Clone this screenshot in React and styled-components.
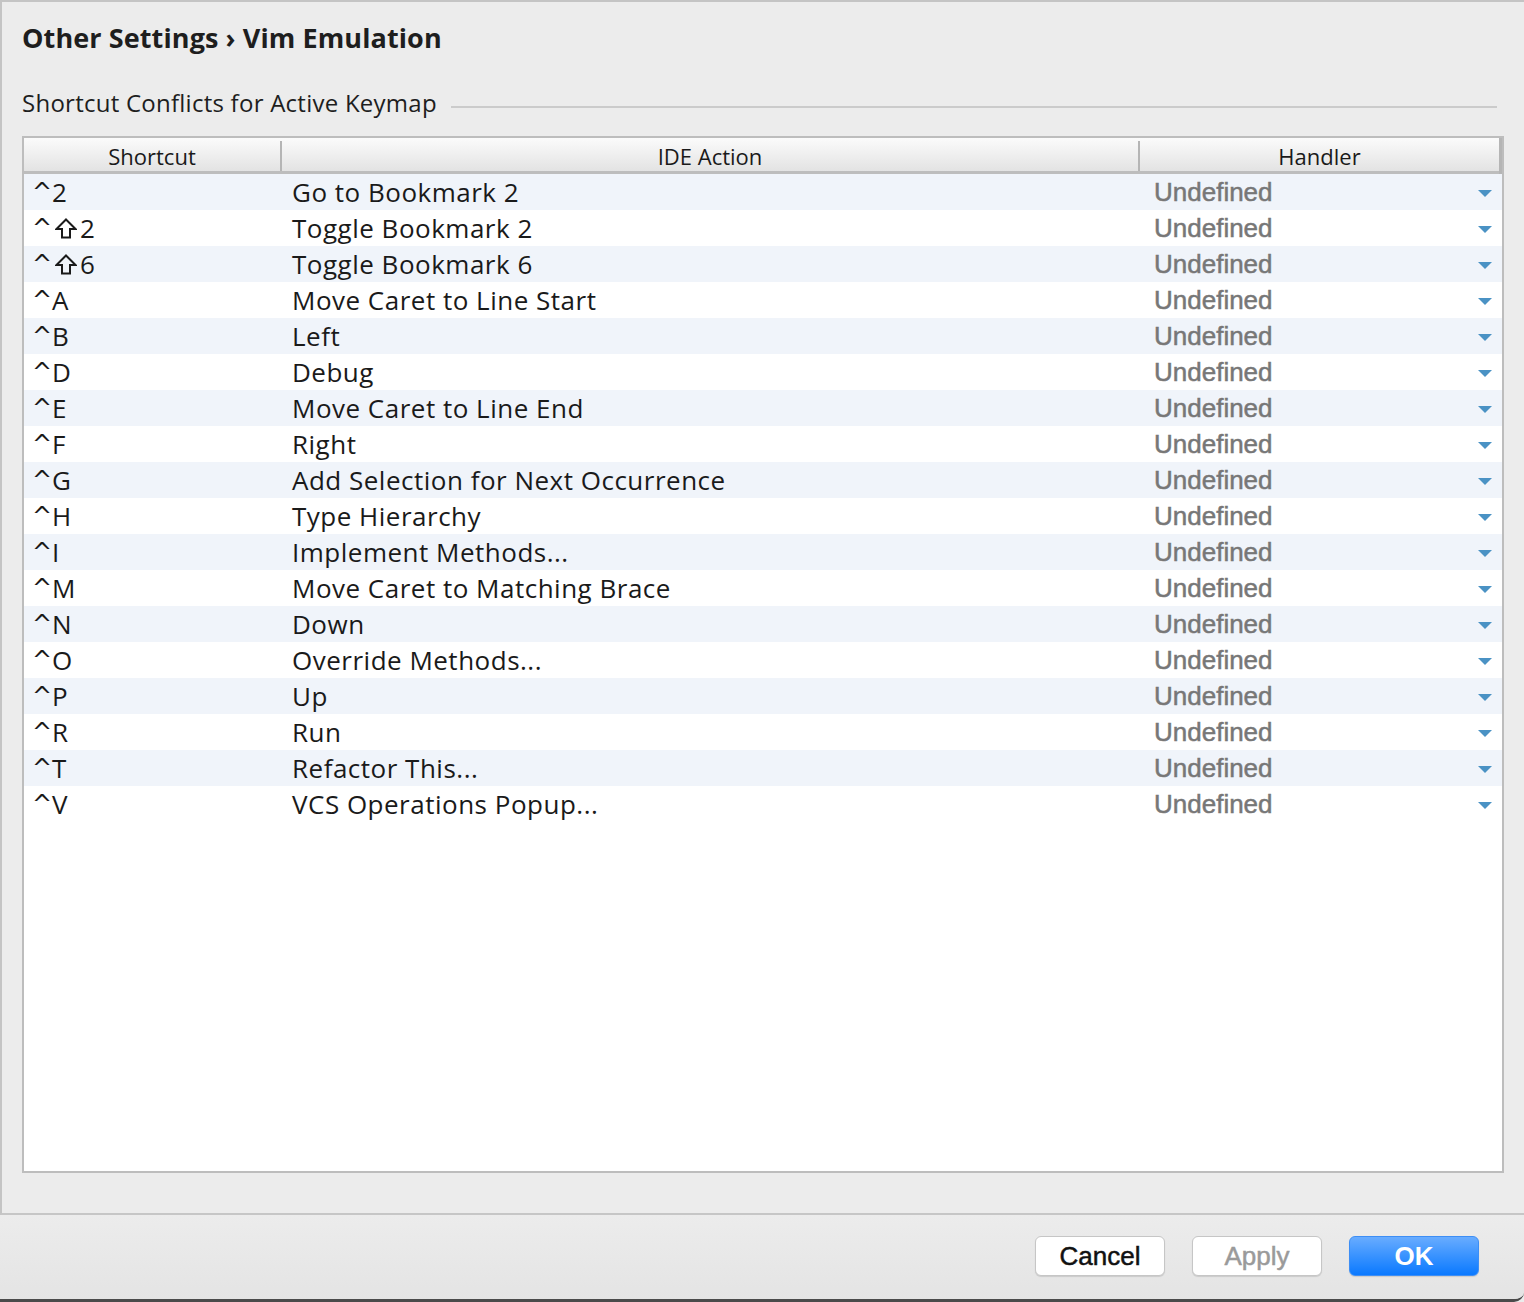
import React from "react";
import styled, { createGlobalStyle } from "styled-components";

const GlobalStyle = createGlobalStyle`
  html, body {
    margin: 0;
    padding: 0;
    background: #ececec;
  }
  body {
    font-family: "Open Sans", "DejaVu Sans", sans-serif;
    color: #1c1c1c;
  }
`;

// shift: true means the shortcut holds the shift key, drawn as an outlined arrow
const rows = [
  [false, "2", "Go to Bookmark 2"],
  [true, "2", "Toggle Bookmark 2"],
  [true, "6", "Toggle Bookmark 6"],
  [false, "A", "Move Caret to Line Start"],
  [false, "B", "Left"],
  [false, "D", "Debug"],
  [false, "E", "Move Caret to Line End"],
  [false, "F", "Right"],
  [false, "G", "Add Selection for Next Occurrence"],
  [false, "H", "Type Hierarchy"],
  [false, "I", "Implement Methods..."],
  [false, "M", "Move Caret to Matching Brace"],
  [false, "N", "Down"],
  [false, "O", "Override Methods..."],
  [false, "P", "Up"],
  [false, "R", "Run"],
  [false, "T", "Refactor This..."],
  [false, "V", "VCS Operations Popup..."],
];

const ShiftIcon = () => (
  <ShiftSvg viewBox="0 0 22 21" width="22" height="21">
    <polygon
      points="11,1.5 20.5,11 15,11 15,19.5 7,19.5 7,11 1.5,11"
      fill="none"
      stroke="#1a1a1a"
      strokeWidth="2"
    />
  </ShiftSvg>
);

const App = () => {
  return (
    <Window>
      <GlobalStyle />
      <Content>
        <Title>Other Settings › Vim Emulation</Title>
        <Section>
          <SectionLabel>Shortcut Conflicts for Active Keymap</SectionLabel>
          <SectionLine />
        </Section>
        <Table>
          <HeaderRow>
            <HeaderCell>Shortcut</HeaderCell>
            <HeaderCell>IDE Action</HeaderCell>
            <HeaderCell last>Handler</HeaderCell>
          </HeaderRow>
          <Body>
            {rows.map(([shift, key, action], i) => (
              <Row key={action} alt={i % 2 === 0}>
                <KeyCell>
                  <Caret>^</Caret>
                  {shift && <ShiftIcon />}
                  {key}
                </KeyCell>
                <ActionCell>{action}</ActionCell>
                <HandlerCell>
                  <span>Undefined</span>
                  <Arrow />
                </HandlerCell>
              </Row>
            ))}
          </Body>
        </Table>
      </Content>
      <Footer>
        <Button>Cancel</Button>
        <Button disabled>Apply</Button>
        <Button primary>OK</Button>
      </Footer>
    </Window>
  );
};

const Window = styled.div`
  width: 1524px;
  height: 1302px;
  display: flex;
  flex-direction: column;
  box-sizing: border-box;
  border-bottom: 3px solid #4a4a4a;
  border-bottom-right-radius: 10px;
  overflow: hidden;
`;

const Content = styled.div`
  flex: 1;
  display: flex;
  flex-direction: column;
  box-sizing: border-box;
  border-top: 2px solid #c4c4c4;
  border-left: 2px solid #c4c4c4;
  border-bottom: 2px solid #c6c6c6;
  padding: 18px 20px 40px 20px;
  background: #ececec;
`;

const Title = styled.h1`
  margin: 0;
  font-size: 27px;
  font-weight: 700;
  line-height: 36px;
  color: #1e1e1e;
  letter-spacing: 0.1px;
`;

const Section = styled.div`
  display: flex;
  align-items: center;
  gap: 14px;
  margin-top: 31px;
  margin-bottom: 17px;
`;

const SectionLabel = styled.div`
  font-size: 24px;
  line-height: 32px;
  letter-spacing: 0.25px;
  color: #1e1e1e;
`;

const SectionLine = styled.div`
  flex: 1;
  height: 2px;
  margin-top: 8px;
  margin-right: 7px;
  background: #cbcbcb;
`;

const Table = styled.div`
  flex: 1;
  display: flex;
  flex-direction: column;
  border: 2px solid #bdbdbd;
  background: #ffffff;
`;

const HeaderRow = styled.div`
  display: grid;
  grid-template-columns: 258px 858px 1fr;
  height: 33px;
  border-bottom: 3px solid #bdbdbd;
  background: linear-gradient(#fbfbfb, #e3e3e3);
`;

const HeaderCell = styled.div`
  display: flex;
  align-items: center;
  justify-content: center;
  font-size: 22px;
  color: #1a1a1a;
  border-right: ${({ last }) => (last ? "3px" : "2px")} solid #b5b5b5;
  margin: ${({ last }) => (last ? "0" : "3px 0")};
`;

const Body = styled.div`
  display: flex;
  flex-direction: column;
`;

const Row = styled.div`
  display: grid;
  grid-template-columns: 258px 860px 1fr;
  height: 36px;
  align-items: center;
  background: ${({ alt }) => (alt ? "#f0f4fa" : "#ffffff")};
  font-size: 26px;
  letter-spacing: 0.5px;
  color: #1a1a1a;
`;

const KeyCell = styled.div`
  display: flex;
  align-items: center;
  padding-left: 8px;
  white-space: nowrap;
`;

const Caret = styled.span`
  font-family: "DejaVu Sans", sans-serif;
  font-size: 24px;
  letter-spacing: 0;
  margin-right: 0;
`;

const ShiftSvg = styled.svg`
  margin: 0 3px 0 3px;
  flex: none;
`;

const ActionCell = styled.div`
  padding-left: 10px;
  white-space: nowrap;
`;

const HandlerCell = styled.div`
  display: flex;
  align-items: center;
  justify-content: space-between;
  padding-left: 12px;
  padding-right: 10px;
  font-family: "Liberation Sans", Arial, sans-serif;
  font-size: 26px;
  letter-spacing: 0;
  color: #777777;
  -webkit-text-stroke: 0.5px #777777;
`;

const Arrow = styled.div`
  width: 0;
  height: 0;
  border-left: 7px solid transparent;
  border-right: 7px solid transparent;
  border-top: 7px solid #4a92c4;
  margin-top: 3px;
`;

const Footer = styled.div`
  height: 84px;
  display: flex;
  align-items: center;
  justify-content: flex-end;
  gap: 27px;
  padding-right: 45px;
  background: linear-gradient(#ececec, #e4e4e4);
`;

const Button = styled.button`
  width: 130px;
  height: 40px;
  border-radius: 6px;
  font-family: "Liberation Sans", Arial, sans-serif;
  font-size: 26px;
  font-weight: ${({ primary }) => (primary ? 700 : 400)};
  color: ${({ primary, disabled }) =>
    primary ? "#ffffff" : disabled ? "#9a9a9a" : "#111111"};
  -webkit-text-stroke: ${({ primary, disabled }) =>
    primary ? "0" : disabled ? "0.5px #9a9a9a" : "0.5px #111111"};
  background: ${({ primary }) =>
    primary ? "linear-gradient(#68acff, #0a79ff)" : "#ffffff"};
  border: 1px solid ${({ primary }) => (primary ? "#3d8ef5" : "#c6c6c6")};
  box-shadow: 0 1px 1px rgba(0, 0, 0, 0.12);
  padding: 0;
  margin-top: -2px;
`;

export default App;
